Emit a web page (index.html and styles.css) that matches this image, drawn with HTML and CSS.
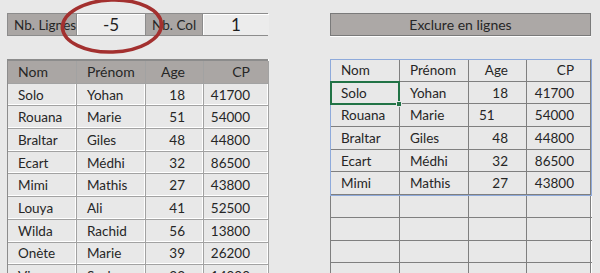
FILE: index.html
```html
<!DOCTYPE html>
<html lang="fr">
<head>
    <meta charset="UTF-8">
    <meta name="viewport" content="width=device-width, initial-scale=1.0">
    <title>Exclure en lignes</title>
    <link rel="stylesheet" href="styles.css">
</head>
<body>
    <div class="sheet">
        <!-- Source data and parameters -->
        <section class="panel">
            <div class="params">
                <div class="param-label">Nb. Lignes</div>
                <div class="param-value">-5</div>
                <div class="param-label">Nb. Col</div>
                <div class="param-value">1</div>
            </div>
            <div class="grid src">
                <div class="cell head">Nom</div><div class="cell head">Prénom</div><div class="cell head num">Age</div><div class="cell head num">CP</div>
                <div class="cell">Solo</div><div class="cell">Yohan</div><div class="cell num">18</div><div class="cell num">41700</div>
                <div class="cell">Rouana</div><div class="cell">Marie</div><div class="cell num">51</div><div class="cell num">54000</div>
                <div class="cell">Braltar</div><div class="cell">Giles</div><div class="cell num">48</div><div class="cell num">44800</div>
                <div class="cell">Ecart</div><div class="cell">Médhi</div><div class="cell num">32</div><div class="cell num">86500</div>
                <div class="cell">Mimi</div><div class="cell">Mathis</div><div class="cell num">27</div><div class="cell num">43800</div>
                <div class="cell">Louya</div><div class="cell">Ali</div><div class="cell num">41</div><div class="cell num">52500</div>
                <div class="cell">Wilda</div><div class="cell">Rachid</div><div class="cell num">56</div><div class="cell num">13800</div>
                <div class="cell">Onète</div><div class="cell">Marie</div><div class="cell num">39</div><div class="cell num">26200</div>
                <div class="cell">Vinca</div><div class="cell">Sacha</div><div class="cell num">33</div><div class="cell num">14000</div>
            </div>
        </section>

        <!-- Result of the exclusion -->
        <section class="panel">
            <div class="title">Exclure en lignes</div>
            <div class="grid out">
                <div class="cell">Nom</div><div class="cell">Prénom</div><div class="cell num">Age</div><div class="cell num">CP</div>
                <div class="cell">Solo</div><div class="cell">Yohan</div><div class="cell num">18</div><div class="cell num">41700</div>
                <div class="cell">Rouana</div><div class="cell">Marie</div><div class="cell text-num">51</div><div class="cell num">54000</div>
                <div class="cell">Braltar</div><div class="cell">Giles</div><div class="cell num">48</div><div class="cell num">44800</div>
                <div class="cell">Ecart</div><div class="cell">Médhi</div><div class="cell num">32</div><div class="cell num">86500</div>
                <div class="cell">Mimi</div><div class="cell">Mathis</div><div class="cell num">27</div><div class="cell num">43800</div>
                <div class="cell"></div><div class="cell"></div><div class="cell"></div><div class="cell"></div>
                <div class="cell"></div><div class="cell"></div><div class="cell"></div><div class="cell"></div>
                <div class="cell"></div><div class="cell"></div><div class="cell"></div><div class="cell"></div>
                <div class="cell"></div><div class="cell"></div><div class="cell"></div><div class="cell"></div>
                <div class="range"></div>
                <div class="selected"><span class="handle"></span></div>
            </div>
        </section>

        <!-- Hand-drawn highlight around the row count -->
        <svg class="circle" width="120" height="62" viewBox="0 0 120 62">
            <ellipse cx="59" cy="27" rx="49.5" ry="26" fill="none" stroke="#a3302f" stroke-width="3.5" transform="rotate(-2 59 27)"/>
        </svg>
    </div>
</body>
</html>
```

FILE: styles.css
```css
body {
    margin: 0;
    padding: 0;
    background-color: #e8e8e8;
    font-family: Lato, "Open Sans", sans-serif;
    font-size: 13.5px;
    color: #262626;
    overflow: hidden;
}
.sheet {
    position: relative;
    display: flex;
    gap: 62px;
    padding: 13px 0 0 7px;
}
.panel {
    display: flex;
    flex-direction: column;
    gap: 23px;
    width: 261px;
}
/* Parameter row */
.params {
    display: grid;
    grid-template-columns: 69px 69px 57px 66px;
    height: 23px;
    border: 1px solid #8c8c8c;
    box-sizing: border-box;
}
.param-label {
    background-color: #aaa6a4;
    border-right: 1px solid #8c8c8c;
    display: flex;
    align-items: center;
    padding-left: 6px;
    font-size: 13.5px;
    white-space: nowrap;
    overflow: visible;
}
.param-value {
    background-color: #ececec;
    border-right: 1px solid #8c8c8c;
    box-shadow: inset 1px 1px 0 #ffffff;
    display: flex;
    align-items: center;
    justify-content: center;
    font-size: 17px;
    color: #1e1e1e;
}
.param-value:last-child {
    border-right: none;
}
.title {
    height: 23px;
    box-sizing: border-box;
    background-color: #aca8a6;
    border: 1px solid #7a7a7a;
    box-shadow: 0 1px 0 #ffffff;
    display: flex;
    align-items: center;
    justify-content: center;
    font-size: 14px;
}
/* Table grids */
.grid {
    position: relative;
    display: grid;
    grid-template-columns: 69px 69px 58px 65px;
    grid-auto-rows: 22.7px;
}
.cell {
    display: flex;
    align-items: center;
    padding: 0 10px;
    box-sizing: border-box;
    white-space: nowrap;
    overflow: hidden;
}
.cell.num {
    justify-content: flex-end;
    padding-right: 18px;
}
.src {
    border: 1px solid #8c8c8c;
    border-top: 2px solid #8c8c8c;
    box-shadow: 1px 0 0 #ffffff;
}
.src .cell {
    border-right: 1px solid #a2a2a2;
    border-bottom: 1px solid #a2a2a2;
    box-shadow: inset -1px -1px 0 #ffffff;
}
.src .cell.head {
    background-color: #aaa6a4;
    box-shadow: none;
    font-size: 14px;
}
.out {
    border-left: 1px solid #7f7f7f;
    border-right: 1px solid #7f7f7f;
    box-shadow: 1px 0 0 #ffffff;
}
.out .cell {
    border-right: 1px solid #7f7f7f;
    border-bottom: 1px solid #7f7f7f;
}
.out .cell:nth-child(4n) {
    border-right: none;
}
.out .cell.text-num {
    padding-left: 10px;
}
/* Blue range outline over the copied block */
.range {
    position: absolute;
    left: -1px;
    top: 0;
    width: 262px;
    height: 137px;
    border: 1px solid #8eaadb;
    box-sizing: border-box;
    pointer-events: none;
}
/* Active cell */
.selected {
    position: absolute;
    left: -1px;
    top: 22px;
    width: 70px;
    height: 24px;
    border: 2px solid #217346;
    box-sizing: border-box;
}
.handle {
    position: absolute;
    right: -4px;
    bottom: -4px;
    width: 4px;
    height: 4px;
    background-color: #217346;
    border: 1px solid #e8e8e8;
}
.circle {
    position: absolute;
    left: 53px;
    top: -1px;
}
```
